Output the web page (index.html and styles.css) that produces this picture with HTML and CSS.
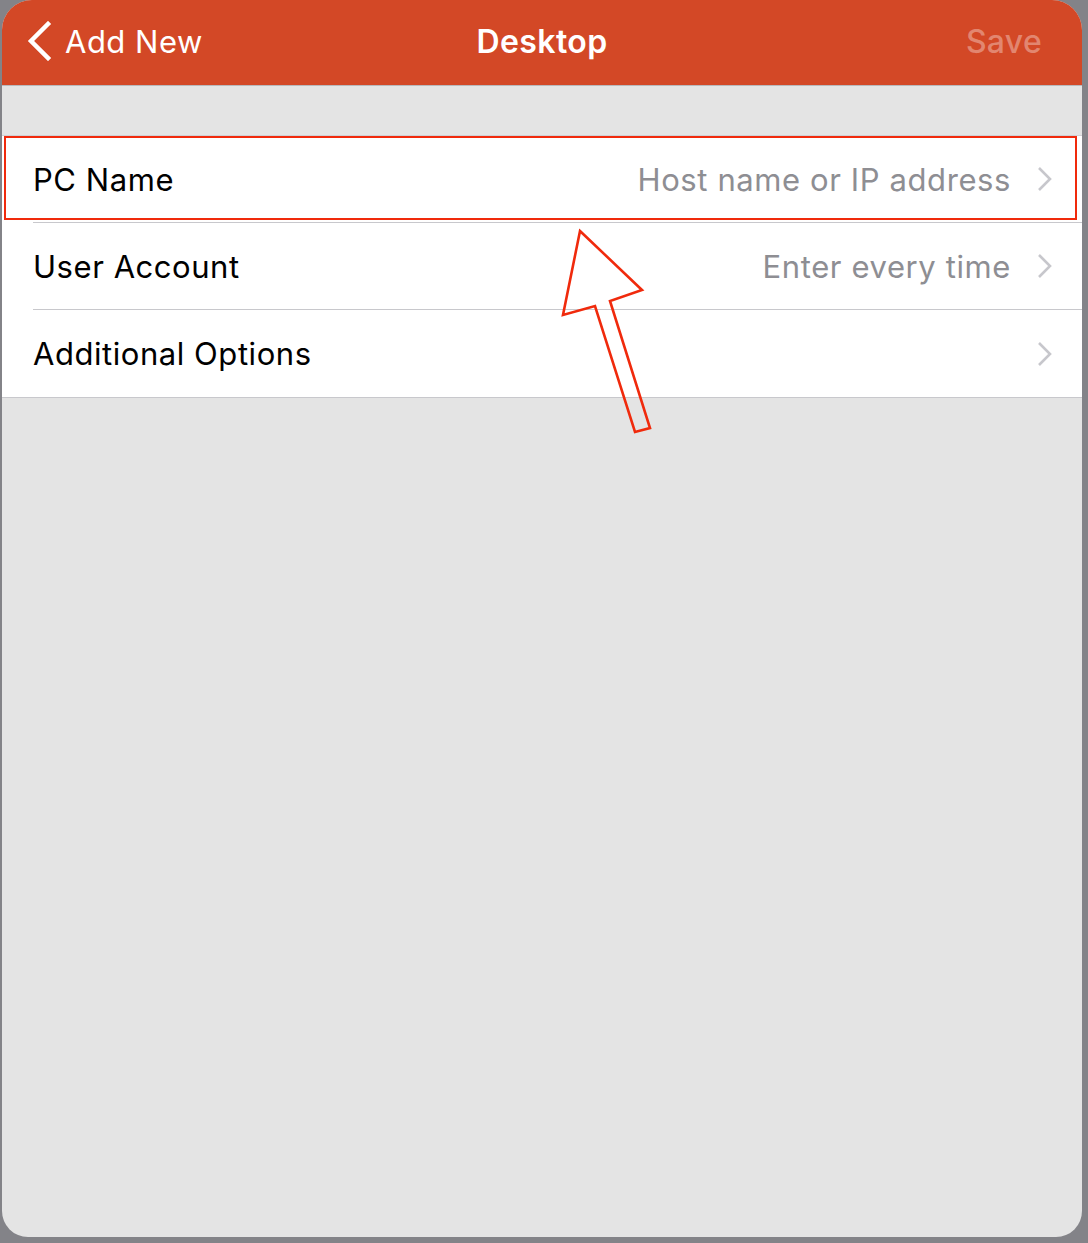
FILE: index.html
```html
<!DOCTYPE html>
<html>
<head>
<meta charset="utf-8">
<link rel="stylesheet" href="styles.css">
</head>
<body>
<div class="screen">
  <div class="panel">
    <header class="navbar">
      <div class="nav-left">
        <svg class="back-chevron" width="26" height="40" viewBox="0 0 26 40"><path d="M22 3 L5 20 L22 37" fill="none" stroke="#fff" stroke-width="4.5" stroke-linecap="square"/></svg>
        <span class="nav-back">Add New</span>
      </div>
      <div class="nav-title">Desktop</div>
      <div class="nav-right">Save</div>
    </header>
    <div class="spacer"></div>
    <div class="list">
      <div class="row">
        <span class="label">PC Name</span>
        <span class="value">Host name or IP address</span>
        <svg class="chev" width="16" height="26" viewBox="0 0 16 26"><path d="M3 2 L14 13 L3 24" fill="none" stroke="#c7c7cc" stroke-width="2.6"/></svg>
      </div>
      <div class="row">
        <span class="label">User Account</span>
        <span class="value">Enter every time</span>
        <svg class="chev" width="16" height="26" viewBox="0 0 16 26"><path d="M3 2 L14 13 L3 24" fill="none" stroke="#c7c7cc" stroke-width="2.6"/></svg>
      </div>
      <div class="row last">
        <span class="label">Additional Options</span>
        <span class="value"></span>
        <svg class="chev" width="16" height="26" viewBox="0 0 16 26"><path d="M3 2 L14 13 L3 24" fill="none" stroke="#c7c7cc" stroke-width="2.6"/></svg>
      </div>
      <div class="highlight"></div>
    </div>
    <div class="rest"></div>
    <svg class="arrow" width="1088" height="1243" viewBox="0 0 1088 1243">
      <polygon points="580,231 642,290 610,301 650,428 635,432 595,306 563,315" fill="none" stroke="#f02a0c" stroke-width="2.6" stroke-linejoin="miter"/>
    </svg>
  </div>
</div>
</body>
</html>
```
FILE: styles.css
```css
* { box-sizing: border-box; }
html, body { margin: 0; padding: 0; }
body {
  width: 1088px;
  height: 1243px;
  background: #838388;
  font-family: "Inter", "Roboto", "Liberation Sans", sans-serif;
  overflow: hidden;
}
.screen {
  padding: 0 6px 6px 2px;
  height: 1243px;
}
.panel {
  position: relative;
  height: 1237px;
  background: #e4e4e4;
  border-radius: 30px 30px 26px 26px;
  overflow: hidden;
  display: flex;
  flex-direction: column;
}
.navbar {
  height: 86px;
  flex: none;
  background: #d34826;
  border-bottom: 1px solid #b9b9bc;
  display: grid;
  grid-template-columns: 1fr auto 1fr;
  align-items: center;
  padding: 0 40px 3px 40px;
  color: #fff;
}
.nav-left {
  display: flex;
  align-items: center;
  gap: 13px;
  margin-left: -16px;
}
.back-chevron { display: block; }
.nav-back {
  font-size: 31px;
  font-weight: 400;
  letter-spacing: 0.5px;
}
.nav-title {
  font-size: 32px;
  font-weight: 600;
  letter-spacing: 0.4px;
}
.nav-right {
  text-align: right;
  font-size: 32px;
  font-weight: 500;
  letter-spacing: 0.3px;
  color: rgba(255,255,255,0.35);
}
.spacer { height: 49px; flex: none; }
.list {
  position: relative;
  background: #fff;
  border-top: 1px solid #d0d0d4;
  border-bottom: 1px solid #c8c8cc;
  padding-left: 31px;
}
.row {
  height: 87px;
  display: flex;
  align-items: center;
  padding-right: 30px;
  border-bottom: 1px solid #c8c8cc;
}
.row.last { border-bottom: none; height: 87px; }
.label {
  font-size: 31px;
  color: #000;
  letter-spacing: 0.55px;
}
.value {
  flex: 1;
  text-align: right;
  font-size: 31px;
  color: #8e8e93;
  letter-spacing: 0.6px;
  margin-right: 25px;
}
.chev { display: block; flex: none; }
.highlight {
  position: absolute;
  left: 2px;
  top: 0px;
  width: 1073px;
  height: 84px;
  border: 2.5px solid #f02a0c;
}
.rest { flex: 1; }
.arrow {
  position: absolute;
  left: -2px;
  top: 0;
  pointer-events: none;
}
```
